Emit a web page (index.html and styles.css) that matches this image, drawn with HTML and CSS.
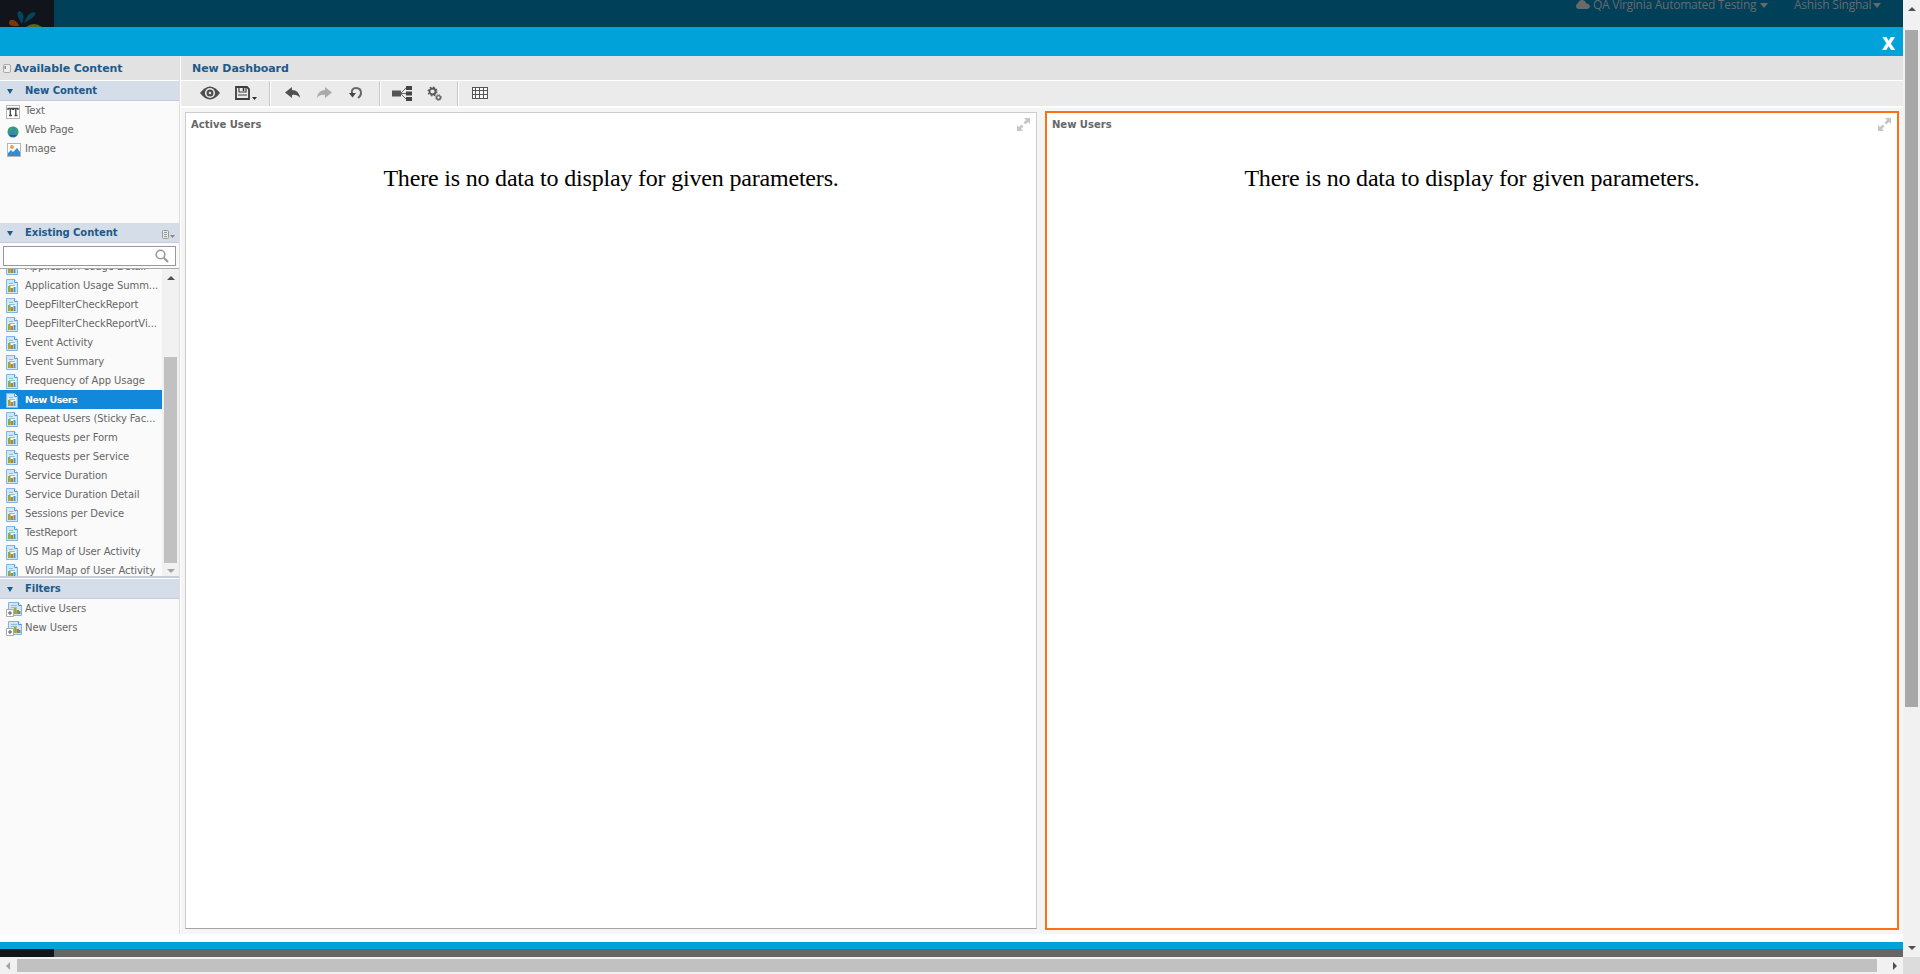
FILE: index.html
```html
<!DOCTYPE html>
<html lang="en">
<head>
<meta charset="utf-8">
<title>New Dashboard</title>
<link rel="stylesheet" href="styles.css">
</head>
<body>
<svg class="defs" aria-hidden="true">
  <symbol id="report" viewBox="0 0 12 15">
    <path d="M.5.5h8l3 3v11H.5z" fill="#cfe6fa" stroke="#7db7ea"/>
    <path d="M8.500.5v3h3" fill="#fff" stroke="#5a9fdc"/>
    <path d="M2 5.500h8v6.500H2z" fill="#eef7fa"/>
    <path d="M3 4.500h4M3 6.500h6" stroke="#8cc0cf"/>
    <path d="M2 7h2.500v6H2z" fill="#92ad38"/>
    <path d="M4.500 9H7v4H4.500z" fill="#c77b32"/>
    <path d="M7.500 8h2v5h-2z" fill="#3c9cc0"/>
  </symbol>
  <symbol id="filter" viewBox="0 0 16 16">
    <path d="M2.500.5h10l3 3v10h-13z" fill="#cfe6fa" stroke="#7db7ea"/>
    <path d="M12.500.5v3h3" fill="#fff" stroke="#4a91d2"/>
    <path d="M5 3.500h6M5 5.500h6" stroke="#8cc0cf"/>
    <path d="M8 6h2.500v6H8z" fill="#92ad38"/><path d="M10.500 8H13v4h-2.500z" fill="#b08030"/><path d="M13 9h1.500v3H13z" fill="#3c9cc0"/>
    <path d="M.5 7.500h7v7h-7z" fill="#fff" stroke="#aaa"/><path d="M2 11h4M4 9v4" stroke="#555"/>
  </symbol>
  <symbol id="expand" viewBox="0 0 13 13">
    <path d="M7 0h6v6l-2-2-2.500 2.500-2-2L9 2zM0 7l2 2 2.500-2.500 2 2L4 11l2 2H0z" fill="#c6c6c6"/>
  </symbol>
</svg>
<div class="app">
  <div class="page">
    <header class="topbar">
      <div class="logo"><svg width="54" height="27"><path d="M22 24Q14 12 20 11Q26 14 22 24M24 23Q28 12 34 12Q39 15 24 23" fill="#00465d"/><path d="M9 23Q9 19 14 20Q18 22 19 26H14Q9 26 9 23" fill="#7b3709"/><path d="M26 27Q34 21 42 27z" fill="#50691f"/></svg></div>
      <div class="account">
        <svg width="14" height="10" viewBox="0 0 14 10"><path d="M3 9Q0 9 0 6Q0 4 2 3Q3 0 6 0Q9 0 10 3Q14 4 14 7Q13 9 11 9z"/></svg>
        <span class="org">QA Virginia Automated Testing</span><i class="caret"></i>
        <span class="user">Ashish Singhal</span><i class="caret"></i>
      </div>
    </header>
    <div class="titlebar"><span>X</span></div>
    <div class="workspace">
      <aside class="sidebar">
        <h1 class="side-title"><svg width="8" height="9"><rect x=".5" y=".5" width="7" height="8" rx="1.500" fill="#eee" stroke="#aaa"/><path d="M1.500 2h1.500v3H1.500z" fill="#888"/></svg>Available Content</h1>
        <section class="new-content">
          <h2 class="section-head"><i class="fold"></i>New Content</h2>
          <ul class="kinds">
            <li><svg width="14" height="14"><rect x=".5" y=".5" width="13" height="13" fill="#fff" stroke="#b5b5b5"/><path d="M2 5V3.500h4.500V5M4.300 4v6M3 10.500h3M7.500 5V3.500H12V5M9.800 4v6M8.500 10.500h3" stroke="#4b4b4b" stroke-width="1.400" fill="none"/></svg>Text</li>
            <li><svg width="14" height="14"><circle cx="7" cy="8" r="5.500" fill="#3687ba"/><path d="M2 5Q5 2 8 3L6 6 3 9zM8 7l3-3 1.500 4-3 4z" fill="#36a263"/><path d="M3 11Q7 15 11 11" fill="#235d88"/></svg>Web Page</li>
            <li><svg width="14" height="14"><rect x=".5" y=".5" width="13" height="13" fill="#fff" stroke="#b5b5b5"/><circle cx="5" cy="4" r="2" fill="#efa04d"/><path d="M1 10l3-3 2 2 4-4 3 4v4H1z" fill="#328bd3"/></svg>Image</li>
          </ul>
        </section>
        <h2 class="section-head"><i class="fold"></i>Existing Content<svg class="list-menu" width="13" height="10"><rect x=".5" y=".5" width="6" height="8" rx="1" fill="#e6e6e6" stroke="#999"/><path d="M2 2.500h3M2 4.500h3M2 6.500h3" stroke="#999"/><path d="M8 5h5l-2.500 3z" fill="#888"/></svg></h2>
        <div class="search"><svg width="14" height="14"><circle cx="5.500" cy="5.500" r="4.300" fill="none" stroke="#999" stroke-width="1.600"/><path d="M8.700 8.700L13 13" stroke="#999" stroke-width="2.200"/></svg></div>
        <div class="list">
          <ul class="reports">
            <li><svg><use href="#report"/></svg>Application Usage Detail</li>
            <li><svg><use href="#report"/></svg>Application Usage Summ...</li>
            <li><svg><use href="#report"/></svg>DeepFilterCheckReport</li>
            <li><svg><use href="#report"/></svg>DeepFilterCheckReportVi...</li>
            <li><svg><use href="#report"/></svg>Event Activity</li>
            <li><svg><use href="#report"/></svg>Event Summary</li>
            <li><svg><use href="#report"/></svg>Frequency of App Usage</li>
            <li class="selected"><svg><use href="#report"/></svg>New Users</li>
            <li><svg><use href="#report"/></svg>Repeat Users (Sticky Fac...</li>
            <li><svg><use href="#report"/></svg>Requests per Form</li>
            <li><svg><use href="#report"/></svg>Requests per Service</li>
            <li><svg><use href="#report"/></svg>Service Duration</li>
            <li><svg><use href="#report"/></svg>Service Duration Detail</li>
            <li><svg><use href="#report"/></svg>Sessions per Device</li>
            <li><svg><use href="#report"/></svg>TestReport</li>
            <li><svg><use href="#report"/></svg>US Map of User Activity</li>
            <li><svg><use href="#report"/></svg>World Map of User Activity</li>
          </ul>
          <div class="list-scroll"><i class="up"></i><b></b><i class="down dim"></i></div>
        </div>
        <h2 class="section-head"><i class="fold"></i>Filters</h2>
        <ul class="filters">
          <li><svg><use href="#filter"/></svg>Active Users</li>
          <li><svg><use href="#filter"/></svg>New Users</li>
        </ul>
      </aside>
      <main class="designer">
        <h1 class="main-title">New Dashboard</h1>
        <div class="toolbar">
          <div class="group view">
            <svg width="20" height="14"><path d="M0 7Q10-6 20 7Q10 20 0 7" fill="#4e4e4e"/><circle cx="10" cy="7" r="4.300" fill="none" stroke="#e8e8e8" stroke-width="1.600"/><circle cx="10" cy="7" r="1.300" fill="#ddd"/></svg>
            <svg width="22" height="14"><path d="M1 1h11l2 2v10H1z" fill="#ebebeb" stroke="#3e3e3e" stroke-width="1.800"/><path d="M4 1v5h7V1M3 9h9" fill="none" stroke="#444" stroke-width="1.200"/><path d="M8.500 2v3" stroke="#333" stroke-width="1.500"/><path d="M17 11h5l-2.500 3z" fill="#333"/></svg>
          </div>
          <div class="group history">
            <svg width="15" height="12"><path d="M0 5.500L7 0v3q7 0 8 8-3-4-8-3v3z" fill="#505050"/></svg>
            <svg width="15" height="12"><path d="M15 5.500L8 0v3Q1 3 0 11q3-4 8-3v3z" fill="#aaa"/></svg>
            <svg width="14" height="14"><path d="M3 8Q2 2 7 2Q12 2 12 7Q12 10 9 12" fill="none" stroke="#666" stroke-width="2"/><path d="M0 7h7l-3.500 4.500z" fill="#444"/></svg>
          </div>
          <div class="group options">
            <svg width="20" height="15"><path d="M0 4.500h9v6H0z" fill="#555"/><path d="M14 0h6v4h-6zM14 5.500h6v4h-6zM14 11h6v4h-6z" fill="#444"/><path d="M9 7.500h5M9 7l5-5M9 8l5 5" stroke="#666" fill="none"/></svg>
            <svg width="15" height="15"><circle cx="5.500" cy="5.500" r="3" fill="none" stroke="#555" stroke-width="1.800"/><circle cx="5.500" cy="5.500" r="4.400" fill="none" stroke="#555" stroke-width="1.200" stroke-dasharray="1.728 1.728"/><circle cx="11.500" cy="11.500" r="1.900" fill="none" stroke="#666" stroke-width="1.400"/><circle cx="11.500" cy="11.500" r="2.900" fill="none" stroke="#666" stroke-dasharray="1.200 1.077"/></svg>
          </div>
          <div class="group grid"><svg width="16" height="12"><path d="M0 0h16v12H0z" fill="#f8f8f8"/><path d="M0 .5h16M0 3.500h16M0 7.500h16M0 11.500h16M.5 0v12M3.500 0v12M7.500 0v12M11.500 0v12M15.500 0v12" stroke="#555"/></svg></div>
        </div>
        <div class="canvas">
          <section class="dashlet"><h3>Active Users<svg><use href="#expand"/></svg></h3><p>There is no data to display for given parameters.</p></section>
          <section class="dashlet active"><h3>New Users<svg><use href="#expand"/></svg></h3><p>There is no data to display for given parameters.</p></section>
        </div>
      </main>
    </div>
    <div class="blue-rule"></div>
    <footer class="footer"><div></div></footer>
  </div>
  <div class="vscroll"><i class="up"></i><b></b><i class="down"></i></div>
  <div class="hscroll"><i class="left"></i><b></b><i class="right"></i></div>
  <div class="corner"></div>
</div>
</body>
</html>
```
FILE: styles.css
```css
* { box-sizing: border-box; }
body { margin: 0; overflow: hidden; font: 10px/19px "DejaVu Sans", sans-serif; color: #666; }
h1, h2, h3, p, ul { margin: 0; padding: 0; font-size: inherit; }
ul { list-style: none; }
svg { flex: none; display: block; }
.defs { display: none; }
.app { display: grid; grid-template: 957px 17px / 1903px 17px; width: 1920px; height: 974px; }
.page { display: flex; flex-direction: column; overflow: hidden; background: #fff; }

.topbar { display: flex; justify-content: space-between; height: 27px; background: #004059; }
.logo { width: 54px; background: #11151b; }
.account { display: flex; height: 10px; align-items: center; padding-right: 22px; font: 12px/10px "Open Sans", sans-serif; color: #6a6a6a; }
.account svg { fill: #6a6a6a; margin-right: 3px; }
.account .org { width: 164px; white-space: nowrap; letter-spacing: -.26px; }
.account .user { width: 76px; margin-left: 26px; white-space: nowrap; letter-spacing: -.22px; }
.caret { margin-left: 3px; border: 4px solid transparent; border-top: 5px solid #6a6a6a; border-bottom: 0; }
.titlebar { height: 29px; background: #00a2da; display: flex; justify-content: flex-end; padding-right: 8px; color: #fff; font: 800 18px/32px "Open Sans", sans-serif; }

.workspace { display: flex; height: 878px; }
.sidebar { width: 180px; border-right: 1px solid #ddd; background: #fafafa; }
.side-title, .main-title { height: 25px; padding-top: 1px; border-bottom: 1px solid #fff; background: #e2e2e2; color: #1c5a8a; font-size: 11px; line-height: 23px; letter-spacing: -.08px; }
.side-title { display: flex; align-items: center; gap: 3px; padding-left: 3px; white-space: nowrap; }
.section-head { display: flex; align-items: center; height: 20px; padding-right: 4px; border-bottom: 1px solid #c3cddc; background: #d5dde8; color: #1c5a8a; font-size: 10px; line-height: 19px; letter-spacing: -.06px; white-space: nowrap; }
.fold { width: 6px; margin: 2px 12px 0 7px; border: 3px solid transparent; border-top: 5px solid #1c5a8a; border-bottom: 0; }
.list-menu { margin: 4px 0 0 auto; }
.new-content { height: 142px; }
li { display: flex; align-items: center; height: 19px; white-space: nowrap; letter-spacing: -.08px; }
.kinds li svg { margin: 3px 5px 0 6px; }
.kinds li:nth-child(3) svg { margin: 3px 4px 0 7px; }
.search { display: flex; align-items: center; justify-content: flex-end; width: 173px; height: 20px; margin: 3px 0 2px 3px; padding-right: 6px; border: 1px solid #999; background: #fff; }
.list { display: flex; height: 310px; margin-bottom: 1px; border-top: 1px solid #aaa; border-bottom: 2px solid #c5cddb; box-shadow: 0 1px #fff; overflow: hidden; }
.reports { width: 162px; margin-top: -12px; }
.reports li svg { width: 12px; height: 15px; margin: 1px 7px 0 6px; }
.reports .selected { background: #1288db; color: #fff; font-weight: bold; font-size: 9.5px; letter-spacing: -.5px; }
.list-scroll { width: 17px; display: flex; flex-direction: column; align-items: center; background: #f1f1f1; }
.list-scroll b { width: 13px; height: 206px; margin: 77px 0 6px; background: #c1c1c1; }
.filters li svg { width: 16px; height: 16px; margin: 3px 3px 0 6px; }

.up, .down { width: 8px; border: 4px solid transparent; }
.up { border-bottom-color: #505050; border-top: 0; }
.down { border-top-color: #505050; border-bottom: 0; }
.down.dim { border-top-color: #a3a3a3; }
.list-scroll .up { margin-top: 7px; }

.designer { flex: 1; margin-left: 1px; background: #f5f5f5; display: flex; flex-direction: column; }
.main-title { padding-left: 11px; }
.toolbar { display: flex; height: 27px; border-bottom: 2px solid #fff; background: #ebebeb; }
.group { display: flex; align-items: center; padding-bottom: 1px; border-right: 1px solid #c8c8c8; box-shadow: 1px 0 #fff; }
.view { width: 89px; padding-left: 19px; gap: 15px; }
.history { width: 110px; padding-left: 15px; gap: 17px; }
.options { width: 78px; padding-left: 12px; gap: 15px; }
.grid { border: 0; box-shadow: none; padding-left: 14px; }
.canvas { flex: 1; display: grid; grid-template-columns: 852px 854px; column-gap: 8px; padding: 3px 4px 4px; }
.dashlet { margin: 1px 0; border: 1px solid #ccc; border-bottom-color: #a5a5a5; background: #fff; }
.dashlet h3 { display: flex; justify-content: space-between; height: 19px; padding: 5px 6px 0 5px; line-height: 14px; }
.dashlet h3 svg { width: 13px; height: 13px; }
.dashlet p { margin-top: 33px; text-align: center; font: 24px/27px "Liberation Serif", serif; letter-spacing: -.19px; color: #000; }
.dashlet.active { margin: 0; border: 2px solid #ff6f14; }

.blue-rule { height: 7px; margin-top: 8px; background: #00a2da; }
.footer { height: 8px; background: #666; }
.footer div { width: 54px; height: 8px; background: #11151b; }

.vscroll { display: flex; flex-direction: column; align-items: center; background: #f1f1f1; }
.vscroll b { width: 13px; height: 677px; margin: 19px 0 239px; background: #a8a8a8; }
.vscroll .up { margin-top: 7px; }
.hscroll { display: flex; align-items: center; background: #f1f1f1; }
.hscroll b { width: 1860px; height: 13px; margin: 0 16px 0 7px; background: #c1c1c1; }
.left, .right { height: 8px; border: 4px solid transparent; }
.left { margin-left: 6px; border-right-color: #a3a3a3; border-left: 0; }
.right { border-left-color: #505050; border-right: 0; }
.corner { background: #dcdcdc; }
```
